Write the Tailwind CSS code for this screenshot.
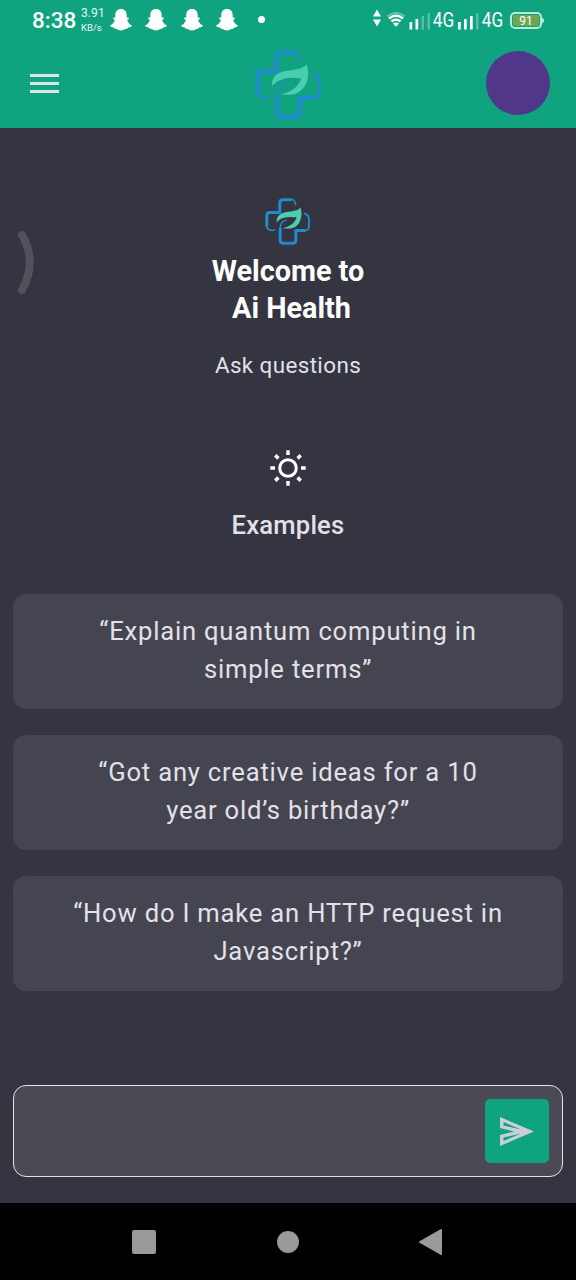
<!DOCTYPE html>
<html lang="en">
<head>
<meta charset="utf-8">
<title>Ai Health</title>
<script src="https://cdn.jsdelivr.net/npm/@tailwindcss/browser@4"></script>
</head>
<body class="bg-[#343541]">
<svg width="0" height="0" class="hidden">
  <symbol id="ghost" viewBox="0 0 22 22"><path fill="#fff" d="M11 0C7.300 0 5.300 2.700 5.300 5.800V8.600L3 8.700C2.600 9.400 3.400 10.200 4.800 10.700C4.200 13.400 2.600 15.500.1 16.500C0 17.600 1.400 18.200 4 18.500L4.700 19.700C7.500 19.300 8.200 21.400 11 21.400S14.500 19.300 17.300 19.700L18 18.500C20.600 18.200 22 17.600 21.900 16.500C19.400 15.500 17.800 13.400 17.200 10.700C18.600 10.200 19.400 9.400 19 8.700L16.700 8.600V5.800C16.700 2.700 14.700 0 11 0Z"/></symbol>
  <symbol id="logo" viewBox="0 0 200 204">
    <g fill="none" stroke="#218bd0" stroke-linecap="round" stroke-linejoin="round">
      <path stroke-width="13" d="M78 7Q64 7 64 21V63H20Q8 63 8 75V118M78 7H112"/>
      <path stroke-width="7" d="M112 5Q130 6 133 28M6 118Q8 136 22 139Q30 142 42 139"/>
      <path stroke-width="13" d="M66 136V184Q66 197 80 197H120Q134 197 134 184V141H172"/>
      <path stroke-width="8" d="M172 141Q190 141 191 127V90Q190 74 173 68"/>
    </g>
    <path fill="#4bcdb1" d="M51 106C49 80 66 65 94 61C120 57 140 56 154 42C162 62 160 88 148 108C132 132 106 136 77 131C106 125 128 112 138 84C118 82 100 80 82 86C68 90 60 96 51 106Z"/>
    <path fill="none" stroke="#218bd0" stroke-width="6" stroke-linecap="round" d="M66 130C66 112 74 100 92 96"/>
  </symbol>
</svg>
<div class="flex h-[1280px] w-[576px] flex-col overflow-hidden font-['Roboto',sans-serif] text-[#e3e1e8]">
  <header class="h-32 bg-[#10a37f] text-white">
    <div class="flex h-10 items-center pl-8">
      <span class="w-[49px] text-[22.500px] font-medium leading-10">8:38</span>
      <div class="flex w-[29px] flex-col pt-0.5 opacity-90">
        <span class="text-[12px] leading-[12px] tracking-[.1px]">3.91</span>
        <span class="text-[9.500px] leading-[17px]">KB/s</span>
      </div>
      <div class="flex gap-[13.300px]">
        <svg class="size-[22px]"><use href="#ghost"/></svg>
        <svg class="size-[22px]"><use href="#ghost"/></svg>
        <svg class="size-[22px]"><use href="#ghost"/></svg>
        <svg class="size-[22px]"><use href="#ghost"/></svg>
      </div>
      <span class="mb-px ml-[20px] size-[7px] rounded-full bg-white"></span>
      <svg class="ml-[106px] h-10 w-[60px] shrink-0" viewBox="370.500 0 60 40" fill="#fff">
        <path d="M376.500 9.500L380.500 16.500H372.500ZM376.500 26.500L372.500 19.500H380.500Z"/>
        <g fill="none" stroke="#fff" stroke-width="2">
          <path opacity=".35" d="M387 16.500Q395.500 9.500 404 16.500"/>
          <path stroke-width="2.400" d="M388.500 18.500Q395.500 13 402.500 18.500M391 21.500Q395.500 18 400 21.500"/>
        </g>
        <path d="M392.500 23.500Q395.500 21.500 398.500 23.500L395.500 26.800Z"/>
        <path d="M409 22H411.700V29.500H409ZM415 19H417.700V29.500H415Z"/>
        <path opacity=".3" d="M421 16H423.500V29.500H421ZM427 13H429.500V29.500H427Z"/>
      </svg>
      <span class="w-[26px] shrink-0 origin-left scale-x-[.86] pl-[2px] text-[20px] leading-10">4G</span>
      <svg class="h-10 w-6 shrink-0" viewBox="457 0 24 40" fill="#fff">
        <path d="M458 22H460.700V29.500H458ZM464 19H466.700V29.500H464ZM470 16H472.700V29.500H470Z"/>
        <path opacity=".3" d="M476 13H478.500V29.500H476Z"/>
      </svg>
      <span class="w-[28px] shrink-0 origin-left scale-x-[.86] pl-px text-[20px] leading-10">4G</span>
      <div class="ml-px flex h-[17px] w-8 shrink-0 items-center justify-center rounded-[5px] border-2 border-[#b4ecd9] p-px">
        <span class="h-full w-full rounded-[2px] bg-[#70a64f] text-center text-[12px] leading-[12px]">91</span>
      </div>
      <span class="h-[5px] w-[2px] shrink-0 rounded-r bg-[#b4ecd9]"></span>
    </div>
    <div class="flex h-[88px] items-center justify-between pl-[30px] pr-[26px]">
      <div class="mb-[2px] flex w-16 flex-col gap-[5px]">
        <span class="h-[3px] w-[29px] bg-[#d9e8e6]"></span>
        <span class="h-[3px] w-[29px] bg-[#d9e8e6]"></span>
        <span class="h-[3px] w-[29px] bg-[#d9e8e6]"></span>
      </div>
      <svg class="mr-1 h-[69px] w-[67px]"><use href="#logo"/></svg>
      <span class="mb-0.5 size-16 rounded-full bg-[#50378a]"></span>
    </div>
  </header>

  <main class="relative flex flex-1 flex-col items-center px-[13px] pt-[70px]">
    <svg class="absolute left-[14px] top-[99px] h-[72px] w-6" viewBox="0 0 24 72" fill="none" stroke="#50515b" stroke-width="8" stroke-linecap="round"><path d="M8 8Q23.500 35 8 63"/></svg>
    <svg class="h-[47px] w-[46px]"><use href="#logo"/></svg>
    <h1 class="mt-[8px] text-center text-[28.800px] font-bold leading-[36.800px] text-white">Welcome to<br><span class="pl-[7px]">Ai Health</span></h1>
    <p class="mt-[22px] text-[22.400px] leading-8 tracking-[.4px]">Ask questions</p>
    <svg class="mt-[68px] size-[38px]" viewBox="-19 -19 38 38" fill="none" stroke="#fff">
      <circle r="8.300" stroke-width="3"/>
      <path stroke-width="3.500" d="M0-17.700V-13M0 17.700V13M-17.700 0H-13M17.700 0H13M-12.700-12.700L-9.600-9.600M12.700-12.700L9.600-9.600M-12.700 12.700L-9.600 9.600M12.700 12.700L9.600 9.600"/>
    </svg>
    <h2 class="mt-[19px] text-[25.600px] font-medium leading-[38.400px] tracking-[.2px]">Examples</h2>
    <div class="mt-[50px] flex w-full flex-col gap-[25.600px] text-center text-[25.600px] leading-[38.400px] tracking-[.8px]">
      <p class="h-[115.200px] rounded-[13px] bg-[#444550] pt-[18px]">“Explain quantum computing in<br>simple terms”</p>
      <p class="h-[115.200px] rounded-[13px] bg-[#444550] pt-[18px]">“Got any creative ideas for a 10<br>year old’s birthday?”</p>
      <p class="h-[115.200px] rounded-[13px] bg-[#444550] pt-[18px]">“How do I make an HTTP request in<br>Javascript?”</p>
    </div>
    <div class="mt-[94.500px] flex h-[92px] w-full items-center justify-end rounded-[13px] border-[1.500px] border-[#e3e1e8] bg-[#4a4a54] pr-[13px]">
      <div class="flex size-16 items-center justify-center rounded-[5px] bg-[#10a37f]">
        <svg class="h-[29px] w-[34px]" viewBox="0 0 34 29"><path fill="#c9cfd8" fill-rule="evenodd" d="M0 0L34 14.500L0 29V18L14 14.500L0 11ZM3.500 5V8.500L21 12.500ZM3.500 24L21 16.500L3.500 20.500Z"/></svg>
      </div>
    </div>
  </main>

  <nav class="flex h-[77px] items-center justify-between bg-black pl-[132px] pr-[134px]">
    <span class="size-6 rounded-[2px] bg-[#999]"></span>
    <span class="size-[22px] rounded-full bg-[#999]"></span>
    <svg class="h-[26px] w-[23px]" viewBox="0 0 23 26"><path fill="#999" stroke="#999" stroke-width="2" stroke-linejoin="round" d="M1 13L22 1V25Z"/></svg>
  </nav>
</div>
</body>
</html>
